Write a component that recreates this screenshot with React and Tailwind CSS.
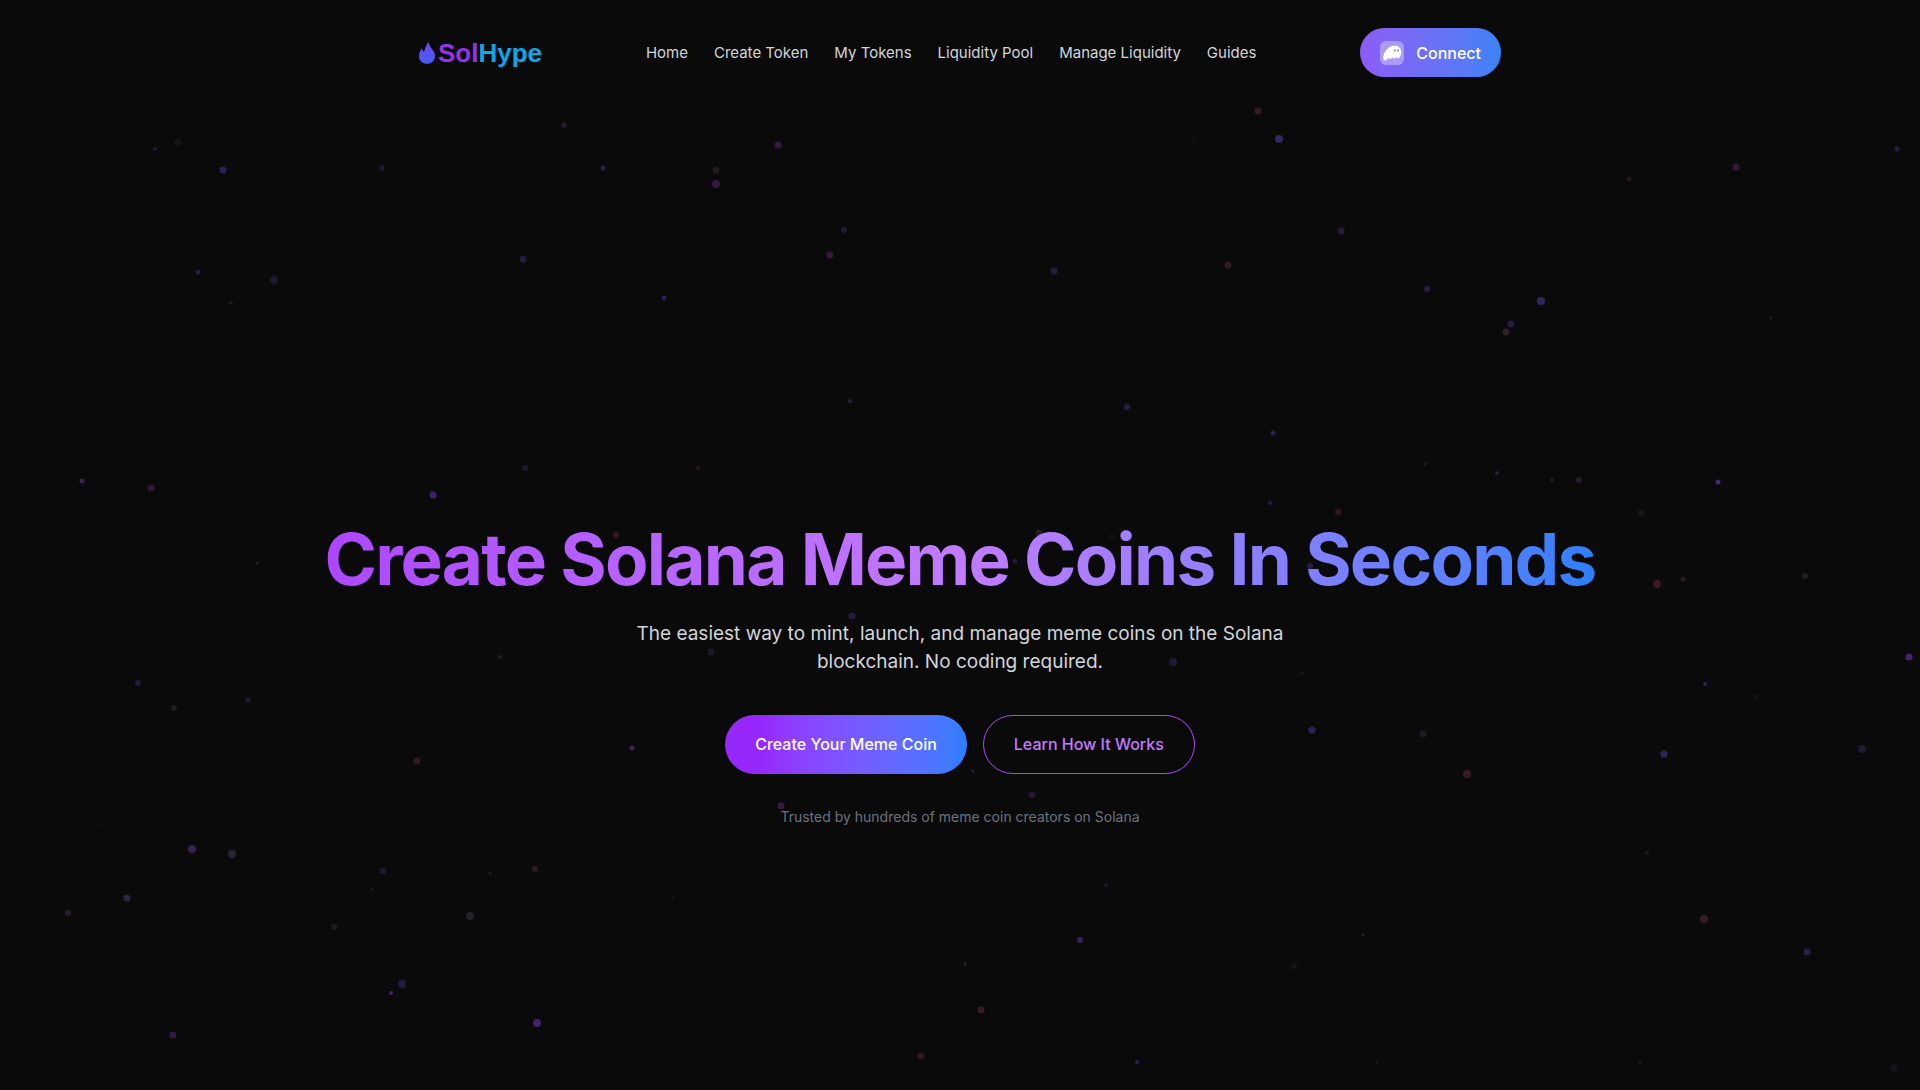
import React from "react";

const NAV_LINKS = ["Home", "Create Token", "My Tokens", "Liquidity Pool", "Manage Liquidity", "Guides"];

// [x, y, radius, color]
const PARTICLES = [
  [564, 125, 2.5, "#2a1a36"], [178, 142, 3.5, "#161616"], [155, 149, 2, "#1f1c3c"], [223, 170, 3.5, "#2e2052"],
  [382, 168, 3, "#1e1729"], [603, 168, 2.5, "#252250"], [198, 272, 2.5, "#2c1a3c"], [274, 280, 4, "#1f1a30"],
  [523, 259, 3.5, "#241a3b"], [231, 303, 2, "#1c1c1c"], [82, 481, 2.5, "#3b2060"], [151, 488, 3.5, "#2a1a38"],
  [433, 495, 3.5, "#40206a"], [525, 468, 3, "#1c182c"], [778, 145, 3.5, "#341a40"], [716, 170, 3.5, "#22181e"],
  [716, 184, 4, "#331a3c"], [844, 230, 3, "#1f1a38"], [830, 255, 3.5, "#341a38"], [1054, 271, 3.5, "#221c3e"],
  [1228, 265, 3.5, "#341a24"], [1258, 111, 3.5, "#341a26"], [1194, 139, 1, "#202020"], [1279, 139, 4, "#302a64"],
  [664, 298, 2.5, "#252458"], [850, 401, 2.5, "#261a34"], [1127, 407, 3, "#2a1d44"], [1273, 433, 2.5, "#2e1e54"],
  [698, 468, 2, "#28151a"], [1341, 231, 3.5, "#251a3c"], [1427, 289, 3, "#2c1c46"], [1511, 324, 3.5, "#281a44"],
  [1506, 332, 3.5, "#302024"], [1541, 301, 4, "#2f2960"], [1629, 179, 2.5, "#241619"], [1736, 167, 3.5, "#341a30"],
  [1897, 149, 2.5, "#2a1c44"], [1771, 318, 1.5, "#261519"], [1425, 464, 1.5, "#1c1c2c"], [1497, 473, 2, "#26244c"],
  [1552, 480, 2.5, "#1b1a26"], [1579, 480, 3, "#2a1a30"], [1718, 482, 2.5, "#42287a"], [616, 535, 3, "#321a24"],
  [852, 616, 3.5, "#261a44"], [711, 652, 3.5, "#1d1a24"], [500, 657, 2, "#261a2a"], [632, 748, 2.5, "#362060"],
  [417, 761, 3.5, "#301a24"], [1270, 503, 2, "#28203a"], [1338, 512, 3, "#34181f"], [1039, 533, 3.5, "#271a30"],
  [1112, 536, 1.5, "#241a2c"], [1015, 561, 2.5, "#221c3c"], [1310, 566, 3, "#281a50"], [1173, 662, 4, "#1f1a34"],
  [1302, 673, 2, "#181818"], [1312, 730, 3.5, "#2a2258"], [1423, 734, 3.5, "#1c1a26"], [257, 563, 1.5, "#22202a"],
  [138, 683, 3, "#241a3c"], [174, 708, 3, "#1c1a22"], [248, 700, 2.5, "#201a30"], [1641, 513, 3.5, "#161618"],
  [1657, 584, 4, "#3a1a24"], [1683, 579, 2.5, "#301a22"], [1805, 576, 3, "#201e24"], [1909, 657, 3.5, "#44226c"],
  [1705, 684, 2, "#2c2658"], [1755, 696, 1.5, "#1c1c1c"], [1467, 774, 4, "#381a22"], [1664, 754, 3.5, "#322262"],
  [1862, 749, 4, "#1f1a34"], [1647, 853, 2, "#1c1a2c"], [1704, 919, 4, "#381a22"], [1807, 952, 3.5, "#2a1f46"],
  [1363, 935, 1.5, "#242232"], [1294, 966, 3, "#161618"], [1377, 1062, 1.5, "#1c1c1c"], [1640, 1062, 1.5, "#30141c"],
  [1894, 1068, 4, "#131318"], [973, 771, 1.5, "#28204a"], [1032, 795, 3, "#2a1a38"], [781, 806, 3.5, "#341a3c"],
  [1106, 885, 2, "#1c1a2c"], [673, 898, 1.5, "#161616"], [1080, 940, 3, "#362464"], [965, 964, 2, "#281a22"],
  [981, 1010, 3.5, "#3a1a24"], [921, 1056, 3.5, "#301a20"], [1137, 1062, 2, "#32205c"], [102, 824, 1.5, "#161616"],
  [192, 849, 4, "#342052"], [232, 854, 4, "#2a2432"], [127, 898, 3.5, "#2e2446"], [68, 913, 3, "#281a38"],
  [383, 871, 3, "#1f1a30"], [372, 889, 1.5, "#1c1c1c"], [334, 927, 3, "#241a1c"], [470, 916, 4, "#222228"],
  [490, 873, 1.5, "#1e1c38"], [535, 869, 3, "#2c1a28"], [402, 984, 4, "#241a42"], [391, 993, 2, "#402270"],
  [537, 1023, 4, "#40226a"], [173, 1035, 3.5, "#321a40"],
];

function Particles() {
  return (
    <svg className="pointer-events-none absolute inset-0 h-full w-full" aria-hidden="true">
      {PARTICLES.map(([x, y, r, color]) => (
        <circle key={`${x}-${y}`} cx={x} cy={y} r={r} fill={color} />
      ))}
    </svg>
  );
}

function Logo() {
  return (
    <a href="#" className="flex items-center gap-[3px]">
      <svg className="h-[22px] w-4" viewBox="0 0 16 22" aria-hidden="true">
        <defs>
          <linearGradient id="flame" x1="0" y1="0" x2="0" y2="1">
            <stop offset="0" stopColor="#6a48f0" />
            <stop offset="1" stopColor="#4a5cf0" />
          </linearGradient>
        </defs>
        <path
          fill="url(#flame)"
          d="M9.8 0C10 3.2 11.4 5 12.8 6.8C14.5 9 16 11.2 16 14C16 18.6 12.6 21.8 8 21.8C3.4 21.8 0 18.6 0 14.2C0 11.2 1.4 9.4 2.2 6.6C3.5 7.4 4.2 8.6 4.6 10C6.4 7.6 6.4 3.2 9.8 0Z"
        />
      </svg>
      <span className="font-['Liberation_Sans',sans-serif] text-[26px] leading-8 font-bold text-[#9333ea]">
        Sol<span className="text-[#0ea5e9]">Hype</span>
      </span>
    </a>
  );
}

function GhostIcon() {
  return (
    <span className="flex size-6 items-center justify-center rounded-md bg-white/35">
      <svg className="size-6" viewBox="0 0 24 24" aria-hidden="true">
        <path
          fill="#fff"
          fillRule="evenodd"
          d="M3.2 16.8C3.2 11.2 8.4 4.8 14.8 4.8C18.9 4.8 21.2 7.4 21.2 11C21.2 14.4 19.6 17.2 18.2 17.2C17.2 17.2 16.9 16.5 17.1 15.7C16.4 16.8 15.5 17.5 14.6 17.5C13.6 17.5 13.2 16.8 13.4 15.9C12.3 17.2 11.2 17.9 10.2 17.9C9.3 17.9 8.9 17.3 8.9 16.5C7.7 18.2 6.4 19.4 5 19.4C3.8 19.4 3.2 18.4 3.2 16.8ZM14.9 8.1C14.3 8.1 13.9 8.8 13.9 9.6C13.9 10.4 14.3 11 14.9 11C15.5 11 15.9 10.4 15.9 9.6C15.9 8.8 15.5 8.1 14.9 8.1ZM18 8.1C17.4 8.1 17 8.8 17 9.6C17 10.4 17.4 11 18 11C18.6 11 19 10.4 19 9.6C19 8.8 18.6 8.1 18 8.1Z"
        />
      </svg>
    </span>
  );
}

function Header() {
  return (
    <header className="relative mx-auto flex w-full max-w-[1130px] items-center justify-between px-6 py-7">
      <Logo />
      <nav className="flex items-center gap-[26px]">
        {NAV_LINKS.map((label) => (
          <a key={label} href="#" className="text-[15px] leading-6 text-gray-300 hover:text-white">
            {label}
          </a>
        ))}
      </nav>
      <button
        type="button"
        className="flex h-[49px] items-center gap-3 rounded-full bg-linear-to-r from-[#8b5cf6] to-[#3b82f6] px-5 font-medium text-white"
      >
        <GhostIcon />
        Connect
      </button>
    </header>
  );
}

function Hero() {
  return (
    <main className="relative flex flex-1 flex-col items-center justify-center px-4 pt-[145px] text-center">
      <h1 className="bg-linear-to-r from-purple-500 via-purple-400 to-blue-500 bg-clip-text text-[71px] leading-[90px] font-bold tracking-tight text-transparent">
        Create Solana Meme Coins In Seconds
      </h1>
      <p className="mt-4 max-w-2xl text-[19px] leading-7 text-gray-300">
        The easiest way to mint, launch, and manage meme coins on the Solana blockchain. No coding required.
      </p>
      <div className="mt-[39px] flex gap-4">
        <button
          type="button"
          className="h-[59px] rounded-full bg-linear-to-r from-[#9628fb] from-15% to-blue-500 px-[30px] font-medium text-white"
        >
          Create Your Meme Coin
        </button>
        <button
          type="button"
          className="h-[59px] rounded-full border border-purple-500 px-[30px] font-medium text-purple-400"
        >
          Learn How It Works
        </button>
      </div>
      <p className="mt-[33px] text-sm text-gray-500">Trusted by hundreds of meme coin creators on Solana</p>
    </main>
  );
}

export default function App() {
  return (
    <div className="relative flex min-h-screen flex-col overflow-hidden bg-[#0a0a0a] font-[Inter,sans-serif]">
      <Particles />
      <Header />
      <Hero />
    </div>
  );
}
